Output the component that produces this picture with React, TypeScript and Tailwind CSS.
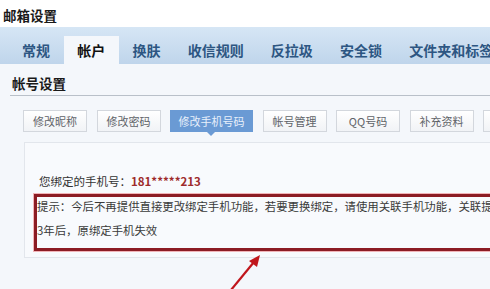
import React from "react";

const tabs = ["常规", "帐户", "换肤", "收信规则", "反拉圾", "安全锁", "文件夹和标签"];
const buttons = ["修改昵称", "修改密码", "修改手机号码", "帐号管理", "QQ号码", "补充资料", "其他"];

export default function App() {
  return (
    <div
      className="relative w-[490px] h-[289px] overflow-hidden bg-[#f4f7fb]"
      style={{ fontFamily: '"Noto Sans CJK SC", "Noto Sans", sans-serif' }}
    >
      <div className="w-[640px]">
        {/* title */}
        <div className="h-[27px] bg-white pl-[3px] pt-[6px] text-[13.5px] font-bold leading-[18px] text-[#1a1a1a]">
          邮箱设置
        </div>
        {/* tabs */}
        <div className="flex h-[37px] items-end bg-gradient-to-b from-[#d6e6f5] to-[#bfd5eb] pl-[8.5px]">
          {tabs.map((t, i) =>
            i === 1 ? (
              <div
                key={t}
                className="flex h-[28px] items-center bg-[#f4f7fb] px-[13.6px] text-[14px] font-bold text-[#111]"
              >
                {t}
              </div>
            ) : (
              <div
                key={t}
                className="flex h-[28px] items-center px-[13.6px] text-[14px] font-bold text-[#2d5682]"
              >
                {t}
              </div>
            )
          )}
        </div>
        {/* section */}
        <div className="px-[10px] pt-[11px]">
          <div className="border-b border-[#b9c0c9] pb-[4px] pl-[2px] text-[13.5px] font-bold leading-[16px] text-[#1a1a1a]">
            帐号设置
          </div>
          <div className="flex gap-[9.5px] pl-[13px] pt-[14px]">
            {buttons.map((b, i) =>
              i === 2 ? (
                <div
                  key={b}
                  className="relative flex h-[22px] w-[83px] items-center justify-center bg-[#6a9ad4] text-[11px] text-[#e8f0fb]"
                >
                  {b}
                  <div className="absolute left-[37px] top-[22px] h-0 w-0 border-l-[4px] border-r-[4px] border-t-[4px] border-l-transparent border-r-transparent border-t-[#6a9ad4]" />
                </div>
              ) : (
                <div
                  key={b}
                  className="flex h-[22px] w-[64px] items-center justify-center border border-[#d3d7dd] bg-gradient-to-b from-white to-[#f1f3f6] text-[11px] text-[#5f6368]"
                >
                  {b}
                </div>
              )
            )}
          </div>
          {/* panel */}
          <div className="ml-[14px] mt-[10px] h-[116px] border border-[#e2e6ec] bg-[#f8fafd] pl-[9px] pt-[30px]">
            <div className="pl-[5px] text-[11.5px] leading-[16px] text-[#333]">
              您绑定的手机号：<span className="font-bold text-[#9e2b2b]">181*****213</span>
            </div>
            <div className="mt-[5px] h-[57px] border-[3px] border-[#8c1c24] text-[11.4px] leading-[18px] text-[#3a3a3a] shadow-[0_0_0_1px_#f1b4b8]">
              <div className="whitespace-nowrap">
                提示：今后不再提供直接更改绑定手机功能，若要更换绑定，请使用关联手机功能，关联提交后
              </div>
              <div className="mt-[6px]">3年后，原绑定手机失效</div>
            </div>
          </div>
        </div>
      </div>
      {/* arrow */}
      <svg className="absolute left-0 top-0" width="490" height="289" viewBox="0 0 490 289">
        <line x1="231" y1="290" x2="254" y2="262" stroke="#c0161c" strokeWidth="2.2" />
        <polygon points="260,255 249,261 257,267" fill="#c0161c" />
      </svg>
    </div>
  );
}
